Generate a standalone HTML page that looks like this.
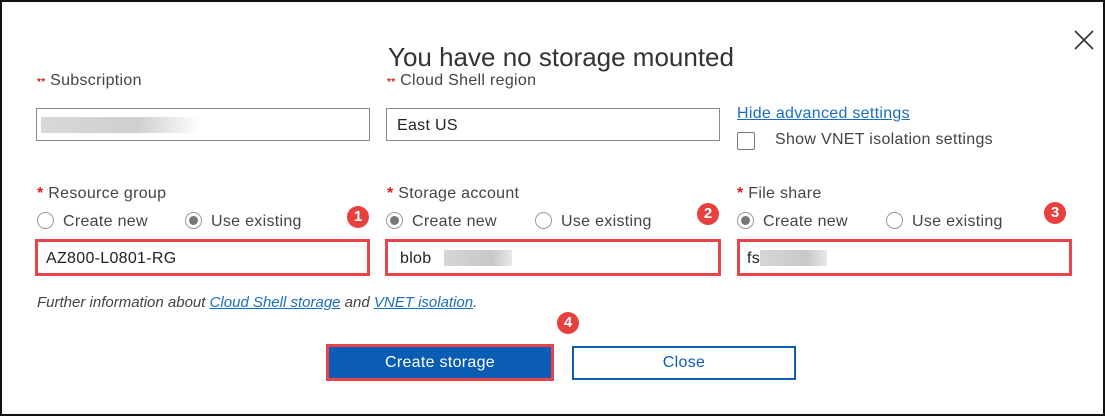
<!DOCTYPE html>
<html><head><style>
*{margin:0;padding:0;box-sizing:border-box}
body{width:1105px;height:416px;background:#fff;position:relative;overflow:hidden;font-family:"Liberation Sans",sans-serif;color:#444;font-size:16px;letter-spacing:0.3px}
.a{position:absolute;white-space:nowrap}
.frame{position:absolute;left:0;top:0;width:1105px;height:416px;border:2px solid #111}
.inp{position:absolute;border:1px solid #8a8a8a;height:33px;background:#fff}
.red{position:absolute;border:3px solid #e8444a}
.rad{position:absolute;width:17px;height:17px;border:1px solid #999;border-radius:50%;background:#fff}
.rad.on::after{content:"";position:absolute;left:3px;top:3px;width:9px;height:9px;border-radius:50%;background:#777}
.b{position:absolute;width:22px;height:22px;border-radius:50%;background:#e8403f;color:#fff;font-weight:bold;font-size:15px;text-align:center;line-height:22px;letter-spacing:0}
.st{color:#d02020;font-weight:bold}
.blur{position:absolute;height:16px;background:linear-gradient(90deg,#d6d6d6,#c8c8c8 70%,#e8e8e8)}
a{color:#1a6ec0;text-decoration:underline}
</style></head><body>
<div class="frame"></div>
<div class="a" style="left:388px;top:42px;font-size:26px;color:#333;letter-spacing:0">You have no storage mounted</div>
<svg class="a" style="left:1074px;top:30px" width="20" height="20"><path d="M1 1L19 19M19 1L1 19" stroke="#333" stroke-width="1.6"/></svg>

<div class="a" style="left:37px;top:72px"><span class="st" style="font-size:10px">**</span> Subscription</div>
<div class="a" style="left:387px;top:72px"><span class="st" style="font-size:10px">**</span> Cloud Shell region</div>
<div class="inp" style="left:36px;top:108px;width:334px"></div>
<div class="blur" style="left:41px;top:117px;width:160px;background:linear-gradient(90deg,#d8d8d8,#cfcfcf 60%,#fff)"></div>
<div class="inp" style="left:386px;top:108px;width:334px"></div>
<div class="a" style="left:397px;top:117px;color:#222">East US</div>
<div class="a" style="left:737px;top:105px"><a>Hide advanced settings</a></div>
<div class="a" style="left:737px;top:132px;width:18px;height:18px;border:1px solid #777;border-radius:2px"></div>
<div class="a" style="left:775px;top:131px">Show VNET isolation settings</div>

<div class="a" style="left:37px;top:185px"><span class="st">*</span> Resource group</div>
<div class="rad" style="left:37px;top:212px"></div><div class="a" style="left:63px;top:213px">Create new</div>
<div class="rad on" style="left:185px;top:212px"></div><div class="a" style="left:211px;top:213px">Use existing</div>
<div class="b" style="left:347px;top:206px">1</div>
<div class="red" style="left:35px;top:239px;width:335px;height:37px"></div>
<div class="a" style="left:46px;top:250px;color:#222">AZ800-L0801-RG</div>

<div class="a" style="left:387px;top:185px"><span class="st">*</span> Storage account</div>
<div class="rad on" style="left:386px;top:212px"></div><div class="a" style="left:412px;top:213px">Create new</div>
<div class="rad" style="left:535px;top:212px"></div><div class="a" style="left:561px;top:213px">Use existing</div>
<div class="b" style="left:697px;top:203px">2</div>
<div class="red" style="left:385px;top:239px;width:336px;height:37px"></div>
<div class="a" style="left:400px;top:250px;color:#222">blob</div>
<div class="blur" style="left:444px;top:250px;width:68px"></div>

<div class="a" style="left:737px;top:185px"><span class="st">*</span> File share</div>
<div class="rad on" style="left:737px;top:212px"></div><div class="a" style="left:763px;top:213px">Create new</div>
<div class="rad" style="left:886px;top:212px"></div><div class="a" style="left:912px;top:213px">Use existing</div>
<div class="b" style="left:1044px;top:202px">3</div>
<div class="red" style="left:737px;top:239px;width:335px;height:37px"></div>
<div class="a" style="left:747px;top:250px;color:#222">fs</div>
<div class="blur" style="left:760px;top:250px;width:67px"></div>

<div class="a" style="left:37px;top:294px;font-style:italic;color:#444;font-size:15px;letter-spacing:0">Further information about <a>Cloud Shell storage</a> and <a>VNET isolation</a>.</div>
<div class="b" style="left:557px;top:312px">4</div>
<div class="a" style="left:326px;top:344px;width:228px;height:37px;border:3px solid #e8444a;background:#0a5db2;color:#fff;text-align:center;line-height:31px">Create storage</div>
<div class="a" style="left:572px;top:346px;width:224px;height:34px;border:2px solid #0a5db2;color:#0a5db2;text-align:center;line-height:30px">Close</div>
</body></html>
